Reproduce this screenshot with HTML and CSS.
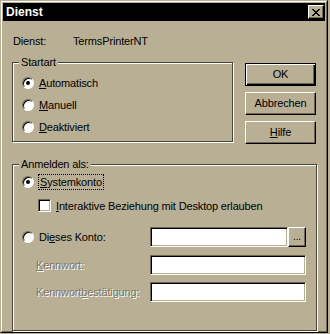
FILE: index.html
```html
<!DOCTYPE html>
<html lang="de">
<head>
<meta charset="utf-8">
<title>Dienst</title>
<link rel="stylesheet" href="styles.css">
</head>
<body>
<div class="window">
  <div class="frame">
    <div class="titlebar">
      <span class="title">Dienst</span>
      <span class="close">
        <svg width="8" height="7" viewBox="0 0 8 7" shape-rendering="crispEdges"><path d="M0 0h2v1H0zM6 0h2v1H6zM1 1h2v1H1zM5 1h2v1H5zM2 2h4v1H2zM3 3h2v1H3zM2 4h4v1H2zM1 5h2v1H1zM5 5h2v1H5zM0 6h2v1H0zM6 6h2v1H6z" fill="#000"/></svg>
      </span>
    </div>
    <div class="client">
      <div class="info"><span class="info-label">Dienst:</span><span>TermsPrinterNT</span></div>
      <div class="top">
        <div class="group start">
          <span class="legend">Startart</span>
          <div class="opt"><span class="radio checked"></span><span><u>A</u>utomatisch</span></div>
          <div class="opt"><span class="radio"></span><span><u>M</u>anuell</span></div>
          <div class="opt"><span class="radio"></span><span><u>D</u>eaktiviert</span></div>
        </div>
        <div class="buttons">
          <div class="btn default"><span>OK</span></div>
          <div class="btn"><span>Abbrechen</span></div>
          <div class="btn"><span><u>H</u>ilfe</span></div>
        </div>
      </div>
      <div class="group logon">
        <span class="legend">Anmelden als:</span>
        <div class="sysrow"><span class="radio checked"></span><span class="focus"><u>S</u>ystemkonto</span></div>
        <div class="chkrow"><span class="check"></span><span><u>I</u>nteraktive Beziehung mit Desktop erlauben</span></div>
        <div class="frow first">
          <div class="flabel"><span class="radio"></span><span>Di<u>e</u>ses Konto:</span></div>
          <div class="input short"></div>
          <div class="browse"><span>...</span></div>
        </div>
        <div class="frow second">
          <div class="flabel indent dis"><span><u>K</u>ennwort:</span></div>
          <div class="input long"></div>
        </div>
        <div class="frow third">
          <div class="flabel indent dis"><span>Kennwort<u>b</u>estätigung:</span></div>
          <div class="input long"></div>
        </div>
      </div>
    </div>
  </div>
</div>
</body>
</html>
```
FILE: styles.css
```css
body {
  margin: 0;
  background: #b9af94;
  font-family: "Liberation Sans", Arial, sans-serif;
  font-size: 11px;
  letter-spacing: -0.15px;
  color: #000;
}

.window {
  width: 328px;
  height: 333px;
  box-sizing: border-box;
  border: 1px solid;
  border-color: #b9af94 #000 #000 #b9af94;
}

.frame {
  height: 100%;
  box-sizing: border-box;
  border: 1px solid;
  border-color: #fff #6e6650 #6e6650 #fff;
  padding: 1px;
}

.titlebar {
  height: 18px;
  background: #000;
  display: flex;
  align-items: center;
  justify-content: space-between;
  padding: 0 1px 0 3px;
}

.title {
  color: #fff;
  font-weight: bold;
  font-size: 12px;
  letter-spacing: 0;
  line-height: 14px;
}

.close {
  width: 16px;
  height: 14px;
  box-sizing: border-box;
  background: #b9af94;
  border: 1px solid;
  border-color: #fff #000 #000 #fff;
  box-shadow: inset -1px -1px 0 #6e6650;
  display: flex;
  align-items: center;
  justify-content: center;
  padding-right: 1px;
}

.close svg {
  display: block;
}

.client {
  padding-left: 9px;
}

.info {
  margin-top: 14px;
  padding-left: 1px;
  display: flex;
  line-height: 13px;
}

.info-label {
  width: 60px;
}

.top {
  display: flex;
  align-items: flex-start;
  margin-top: 14px;
}

.group {
  position: relative;
  box-sizing: border-box;
  border: 1px solid #4a4434;
  box-shadow: inset 1px 1px 0 #fff, 1px 1px 0 #fff;
}

.legend {
  position: absolute;
  top: -8px;
  left: 6px;
  padding: 0 2px;
  background: #b9af94;
  line-height: 14px;
}

.start {
  width: 221px;
  height: 80px;
  padding: 9px 0 0 9px;
}

.opt {
  display: flex;
  align-items: center;
  gap: 5px;
  height: 22px;
}

.radio {
  position: relative;
  flex: none;
  width: 12px;
  height: 12px;
  box-sizing: border-box;
  border-radius: 50%;
  background: #fff;
  border: 1px solid;
  border-color: #6e6650 #fff #fff #6e6650;
  box-shadow: inset 1px 1px 0 #000;
}

.radio.checked::after {
  content: "";
  position: absolute;
  left: 3px;
  top: 3px;
  width: 4px;
  height: 4px;
  border-radius: 50%;
  background: #000;
}

.buttons {
  margin-left: 12px;
  margin-top: 1px;
  display: flex;
  flex-direction: column;
  gap: 6px;
}

.btn {
  width: 71px;
  height: 23px;
  box-sizing: border-box;
  border: 1px solid;
  border-color: #fff #000 #000 #fff;
  box-shadow: inset -1px -1px 0 #6e6650;
  display: flex;
  align-items: center;
  justify-content: center;
  line-height: 13px;
}

.btn.default {
  border: 1px solid #000;
  box-shadow: inset 1px 1px 0 #fff, inset -1px -1px 0 #000, inset -2px -2px 0 #6e6650;
}

.logon {
  margin-top: 20px;
  width: 305px;
  height: 167px;
  padding: 9px 0 0 9px;
}

.sysrow {
  display: flex;
  align-items: center;
  gap: 4px;
  height: 16px;
}

.focus {
  border: 1px dotted #000;
  padding: 0 1px;
  line-height: 14px;
}

.chkrow {
  margin: 9px 0 0 16px;
  display: flex;
  align-items: center;
  gap: 5px;
  height: 13px;
}

.check {
  flex: none;
  width: 13px;
  height: 13px;
  box-sizing: border-box;
  background: #fff;
  border: 1px solid;
  border-color: #6e6650 #fff #fff #6e6650;
  box-shadow: inset 1px 1px 0 #000, inset -1px -1px 0 #b9af94;
}

.frow {
  display: flex;
  align-items: center;
  height: 20px;
}

.frow.first {
  margin-top: 15px;
}

.frow.second {
  margin-top: 8px;
}

.frow.third {
  margin-top: 7px;
}

.flabel {
  flex: none;
  width: 128px;
  box-sizing: border-box;
  display: flex;
  align-items: center;
  gap: 5px;
}

.flabel.indent {
  padding-left: 14px;
}

.dis {
  color: #7f7760;
  text-shadow: 1px 1px 0 #fff;
}

.input {
  height: 20px;
  box-sizing: border-box;
  background: #fff;
  border: 1px solid;
  border-color: #6e6650 #fff #fff #6e6650;
  box-shadow: inset 1px 1px 0 #000, inset -1px -1px 0 #b9af94;
}

.input.short {
  width: 138px;
}

.input.long {
  width: 156px;
}

.browse {
  width: 18px;
  height: 20px;
  box-sizing: border-box;
  border: 1px solid;
  border-color: #fff #000 #000 #fff;
  box-shadow: inset -1px -1px 0 #6e6650;
  display: flex;
  align-items: flex-end;
  justify-content: center;
  font-size: 10px;
  line-height: 14px;
  padding-bottom: 2px;
}
```
